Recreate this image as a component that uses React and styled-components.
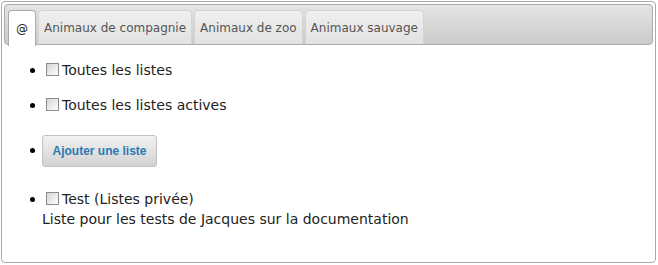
import React from "react";
import styled, { createGlobalStyle } from "styled-components";

const Global = createGlobalStyle`
  html, body { margin: 0; padding: 0; background: #fff; }
  #root { padding: 1px; }
`;

const Tabs = styled.div`
  box-sizing: border-box;
  width: 655px;
  height: 262px;
  border: 1px solid #aaaaaa;
  border-radius: 4px;
  padding: 2px;
  background: #fff;
  font-family: "DejaVu Sans", Verdana, sans-serif;
  color: #222;
`;

const TabBar = styled.ul`
  list-style: none;
  margin: 0;
  padding: 6px 3px 0 3px;
  display: flex;
  gap: 2px;
  height: 41px;
  box-sizing: border-box;
  border: 1px solid #aaaaaa;
  border-radius: 4px;
  background: linear-gradient(#e4e4e4, #cbcbcb);
  align-items: flex-end;
`;

const Tab = styled.li`
  box-sizing: border-box;
  height: ${(p) => (p.$active ? "36px" : "35px")};
  margin-bottom: ${(p) => (p.$active ? "-2px" : "-1px")};
  padding: 0 ${(p) => p.$pad}px;
  display: flex;
  align-items: center;
  border: 1px solid ${(p) => (p.$active ? "#aaaaaa" : "#d3d3d3")};
  border-bottom: ${(p) => (p.$active ? "none" : "1px solid #aaaaaa")};
  border-radius: 4px 4px 0 0;
  background: ${(p) => (p.$active ? "#ffffff" : "linear-gradient(#efefef, #e2e2e2)")};
  color: ${(p) => (p.$active ? "#212121" : "#555555")};
  font-size: 12px;
  white-space: nowrap;
`;

const Panel = styled.div`
  padding: 0;
`;

const List = styled.ul`
  list-style: none;
  margin: 0;
  padding: 15px 0 0 38px;
  font-size: 14px;
  line-height: 20px;
`;

const Item = styled.li`
  position: relative;
  margin-bottom: ${(p) => p.$mb}px;
  &::before {
    content: "";
    position: absolute;
    left: -12px;
    top: ${(p) => p.$dot}px;
    width: 5px;
    height: 5px;
    border-radius: 50%;
    background: #000;
  }
`;

const Check = styled.input.attrs({ type: "checkbox" })`
  appearance: none;
  box-sizing: border-box;
  width: 13px;
  height: 13px;
  margin: 0 3px 0 4px;
  vertical-align: -1px;
  border: 1px solid #8c8c8c;
  background: linear-gradient(135deg, #d4d4d4 0%, #eeeeee 60%, #ffffff 100%);
`;

const Button = styled.button`
  display: inline-block;
  box-sizing: border-box;
  width: 115px;
  height: 32px;
  border: 1px solid #c2c2c2;
  border-radius: 3px;
  background: linear-gradient(#f2f2f2, #d2d2d2);
  font-family: "Liberation Sans", Arial, sans-serif;
  font-weight: bold;
  font-size: 12px;
  color: #2a79b4;
  padding: 0;
`;

const Desc = styled.div``;

export default function App() {
  return (
    <>
      <Global />
      <Tabs>
        <TabBar>
          <Tab $active $pad={7}>@</Tab>
          <Tab $pad={5}>Animaux de compagnie</Tab>
          <Tab $pad={5}>Animaux de zoo</Tab>
          <Tab $pad={5}>Animaux sauvage</Tab>
        </TabBar>
        <Panel>
          <List>
            <Item $mb={15} $dot={8}>
              <Check />Toutes les listes
            </Item>
            <Item $mb={20} $dot={8}>
              <Check />Toutes les listes actives
            </Item>
            <Item $mb={22} $dot={13}>
              <Button>Ajouter une liste</Button>
            </Item>
            <Item $mb={0} $dot={8}>
              <Check />Test (Listes privée)
              <Desc>Liste pour les tests de Jacques sur la documentation</Desc>
            </Item>
          </List>
        </Panel>
      </Tabs>
    </>
  );
}
